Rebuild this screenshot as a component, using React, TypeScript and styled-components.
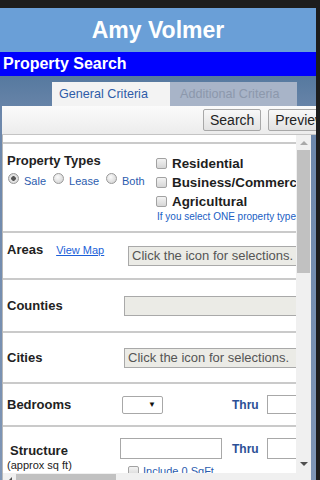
import styled, { createGlobalStyle } from 'styled-components'

const GlobalStyle = createGlobalStyle`
  html, body {
    margin: 0;
    padding: 0;
    height: 480px;
    overflow: hidden;
    background: #1d1d1d;
  }
  body {
    font-family: "Liberation Sans", Arial, sans-serif;
  }
`

const Page = styled.div`
  width: 316px;
  padding-top: 8px;
  display: flex;
  flex-direction: column;
`

const Header = styled.h1`
  margin: 0;
  height: 44px;
  background: #6a9fd7;
  color: #fff;
  font-size: 23px;
  font-weight: 700;
  display: flex;
  align-items: center;
  justify-content: center;
`

const TitleBar = styled.div`
  height: 24px;
  background: #0000fe;
  color: #fff;
  font-size: 16px;
  font-weight: 700;
  padding-left: 3px;
  display: flex;
  align-items: center;
`

const Frame = styled.div`
  background: linear-gradient(180deg, #56799f 0px, #6c87ab 40px, #7f96b6 100%);
  padding: 6px 0 0 2px;
  display: flex;
  flex-direction: column;
`

const TabRow = styled.div`
  display: flex;
  height: 24px;
  padding-left: 50px;
`

const Tab = styled.div<{ $active?: boolean; $w: number }>`
  width: ${p => p.$w}px;
  box-sizing: border-box;
  padding-left: ${p => (p.$active ? 7 : 10)}px;
  background: ${p => (p.$active ? '#f3f3f3' : '#a8b4c8')};
  color: ${p => (p.$active ? '#2f5ca8' : '#8c98ac')};
  font-size: 12.6px;
  display: flex;
  align-items: center;
`

const Panel = styled.div`
  display: flex;
  flex-direction: column;
  overflow: hidden;
`

const Toolbar = styled.div`
  height: 28px;
  background: linear-gradient(180deg, #fbfbfb, #ececec);
  border-bottom: 1px solid #c4c4c4;
  display: flex;
  align-items: center;
  gap: 7px;
  padding-left: 201px;
`

const Button = styled.button`
  flex: none;
  height: 22px;
  padding: 0 6px;
  font-family: inherit;
  font-size: 14px;
  color: #222;
  background: linear-gradient(180deg, #f8f8f8, #e2e2e2);
  border: 1px solid #a8a8a8;
  border-radius: 2px;
`

const ScrollArea = styled.div`
  margin-right: 5px;
  background: #fff;
  border-left: 1px solid #b8b8b8;
  display: flex;
  flex-direction: column;
`

const ScrollBody = styled.div`
  height: 338px;
  display: flex;
`

const Viewport = styled.div`
  flex: 1;
  min-width: 0;
  overflow: hidden;
`

const Content = styled.div`
  width: 360px;
  padding-top: 7px;
`

const VScroll = styled.div`
  width: 15px;
  flex: none;
  background: #f0f0f0;
  display: flex;
  flex-direction: column;
  align-items: center;
  padding: 6px 0 7px;
  box-sizing: border-box;
`

const Arrow = styled.span<{ $dir: 'up' | 'down' | 'left'; $dim?: boolean }>`
  width: 0;
  height: 0;
  flex: none;
  border: 4px solid transparent;
  ${p => `border-${{ up: 'bottom', down: 'top', left: 'right' }[p.$dir]}-color: ${p.$dim ? '#a9a9a9' : '#505050'};`}
  ${p => `border-${{ up: 'top', down: 'bottom', left: 'left' }[p.$dir]}-width: 0;`}
  margin-top: ${p => (p.$dir === 'left' ? 3 : 0)}px;
`

const VThumb = styled.div`
  width: 13px;
  height: 123px;
  margin-top: 5px;
  background: #c1c1c1;
`

const Spacer = styled.div`
  flex: 1;
`

const HScroll = styled.div`
  height: 15px;
  display: flex;
  background: #f0f0f0;
`

const HTrack = styled.div`
  flex: 1;
  display: flex;
  align-items: flex-start;
  padding: 1px 0 0 5px;
  gap: 4px;
`

const HThumb = styled.div`
  width: 100px;
  height: 13px;
  background: #c1c1c1;
`

const Row = styled.div<{ $h: number }>`
  height: ${p => p.$h}px;
  box-sizing: border-box;
  border-top: 2px solid #cacaca;
  padding-left: 4px;
  display: flex;
  align-items: center;
`

const TypesRow = styled(Row)`
  align-items: flex-start;
`

const TypesLeft = styled.div`
  width: 149px;
  flex: none;
  padding-top: 9px;
`

const TypesRight = styled.div`
  padding-top: 10px;
  white-space: nowrap;
`

const Label = styled.div<{ $w?: number; $raise?: number }>`
  width: ${p => (p.$w ? `${p.$w}px` : 'auto')};
  flex: none;
  font-size: 13px;
  font-weight: 700;
  line-height: 16px;
  color: #222;
  margin-bottom: ${p => p.$raise || 0}px;
`

const LabelGroup = styled.div<{ $w: number; $raise?: number }>`
  width: ${p => p.$w}px;
  flex: none;
  display: flex;
  align-items: center;
  gap: 13px;
  margin-bottom: ${p => p.$raise || 0}px;
`

const MapLink = styled.a`
  font-size: 11px;
  color: #1c5fd8;
  text-decoration: underline;
`

const RadioGroup = styled.div`
  display: flex;
  align-items: center;
  gap: 7px;
  margin-top: 4px;
  margin-left: 1px;
`

const RadioItem = styled.label`
  display: flex;
  align-items: center;
  gap: 5px;
  font-size: 11px;
  color: #2b5cae;
`

const Radio = styled.span<{ $checked?: boolean }>`
  width: 11px;
  height: 11px;
  box-sizing: border-box;
  margin-bottom: 4px;
  border-radius: 50%;
  border: 1px solid #999;
  background: ${p =>
    p.$checked
      ? 'radial-gradient(circle, #555 0 2px, #e6e6e6 2.6px, #cfcfcf 100%)'
      : 'radial-gradient(circle at 40% 35%, #fafafa, #cdcdcd)'};
`

const CheckLine = styled.label`
  display: flex;
  align-items: center;
  gap: 5px;
  height: 19px;
  font-size: 13.4px;
  font-weight: 700;
  color: #1e1e1e;
`

const Check = styled.span`
  width: 11px;
  height: 11px;
  flex: none;
  box-sizing: border-box;
  border: 1px solid #a2a2a2;
  border-radius: 2px;
  background: linear-gradient(180deg, #f3f3f3, #d6d6d6);
`

const Note = styled.div`
  font-size: 10px;
  line-height: 12px;
  color: #2060c4;
  margin-left: 1px;
`

const PickBox = styled.div`
  width: 200px;
  height: 20px;
  flex: none;
  box-sizing: border-box;
  border: 1px solid #a9a9a9;
  background: #ebebe6;
  color: #555;
  font-size: 13px;
  line-height: 18px;
  padding-left: 3px;
  white-space: nowrap;
`

const FieldCell = styled.div<{ $w: number }>`
  width: ${p => p.$w}px;
  flex: none;
  display: flex;
  align-items: center;
`

const Select = styled.div`
  width: 41px;
  height: 18px;
  box-sizing: border-box;
  border: 1px solid #a8a8a8;
  border-radius: 2px;
  background: #fff;
  display: flex;
  align-items: center;
  justify-content: flex-end;
  padding-right: 6px;
  font-size: 8px;
  color: #111;
`

const TextBox = styled.div<{ $w: number; $h: number }>`
  width: ${p => p.$w}px;
  height: ${p => p.$h}px;
  flex: none;
  box-sizing: border-box;
  border: 1px solid #a8a8a8;
  background: #fff;
`

const Thru = styled.span`
  width: 35px;
  flex: none;
  font-size: 12px;
  font-weight: 700;
  color: #2c4f96;
`

const StructRow = styled(Row)`
  align-items: flex-start;
  padding-top: 11px;
`

const StructLabel = styled.div`
  width: 64px;
  flex: none;
  text-align: center;
  padding-top: 5px;
`

const SubLabel = styled.div`
  font-size: 11px;
  line-height: 13px;
  color: #222;
  white-space: nowrap;
`

const StructFields = styled.div`
  margin-left: 49px;
  display: flex;
  flex-direction: column;
  gap: 6px;
`

const FieldLine = styled.div`
  display: flex;
  align-items: center;
`

const IncludeLine = styled.label`
  display: flex;
  align-items: center;
  gap: 4px;
  margin-left: 8px;
  font-size: 11px;
  color: #2b5cae;
`

export default function App() {
  return (
    <>
      <GlobalStyle />
      <Page>
        <Header>Amy Volmer</Header>
        <TitleBar>Property Search</TitleBar>
        <Frame>
          <TabRow>
            <Tab $active $w={118}>General Criteria</Tab>
            <Tab $w={127}>Additional Criteria</Tab>
          </TabRow>
          <Panel>
            <Toolbar>
              <Button>Search</Button>
              <Button>Preview</Button>
            </Toolbar>
            <ScrollArea>
              <ScrollBody>
                <Viewport>
                  <Content>
                    <TypesRow $h={89}>
                      <TypesLeft>
                        <Label>Property Types</Label>
                        <RadioGroup>
                          <RadioItem><Radio $checked />Sale</RadioItem>
                          <RadioItem><Radio />Lease</RadioItem>
                          <RadioItem><Radio />Both</RadioItem>
                        </RadioGroup>
                      </TypesLeft>
                      <TypesRight>
                        <CheckLine><Check />Residential</CheckLine>
                        <CheckLine><Check />Business/Commercial</CheckLine>
                        <CheckLine><Check />Agricultural</CheckLine>
                        <Note>If you select ONE property type, more criteria are available.</Note>
                      </TypesRight>
                    </TypesRow>

                    <Row $h={47}>
                      <LabelGroup $w={121} $raise={11}>
                        <Label>Areas</Label>
                        <MapLink>View Map</MapLink>
                      </LabelGroup>
                      <PickBox>Click the icon for selections.</PickBox>
                    </Row>

                    <Row $h={53}>
                      <Label $w={117}>Counties</Label>
                      <PickBox />
                    </Row>

                    <Row $h={51}>
                      <Label $w={117}>Cities</Label>
                      <PickBox>Click the icon for selections.</PickBox>
                    </Row>

                    <Row $h={43}>
                      <Label $w={115}>Bedrooms</Label>
                      <FieldCell $w={110}>
                        <Select>▼</Select>
                      </FieldCell>
                      <Thru>Thru</Thru>
                      <TextBox $w={60} $h={19} />
                    </Row>

                    <StructRow $h={60}>
                      <StructLabel>
                        <Label>Structure</Label>
                        <SubLabel>(approx sq ft)</SubLabel>
                      </StructLabel>
                      <StructFields>
                        <FieldLine>
                          <FieldCell $w={112}>
                            <TextBox $w={102} $h={21} />
                          </FieldCell>
                          <Thru>Thru</Thru>
                          <TextBox $w={60} $h={21} />
                        </FieldLine>
                        <IncludeLine><Check />Include 0 SqFt</IncludeLine>
                      </StructFields>
                    </StructRow>
                  </Content>
                </Viewport>
                <VScroll>
                  <Arrow $dir="up" $dim />
                  <VThumb />
                  <Spacer />
                  <Arrow $dir="down" />
                </VScroll>
              </ScrollBody>
              <HScroll>
                <HTrack>
                  <Arrow $dir="left" />
                  <HThumb />
                </HTrack>
              </HScroll>
            </ScrollArea>
          </Panel>
        </Frame>
      </Page>
    </>
  )
}
